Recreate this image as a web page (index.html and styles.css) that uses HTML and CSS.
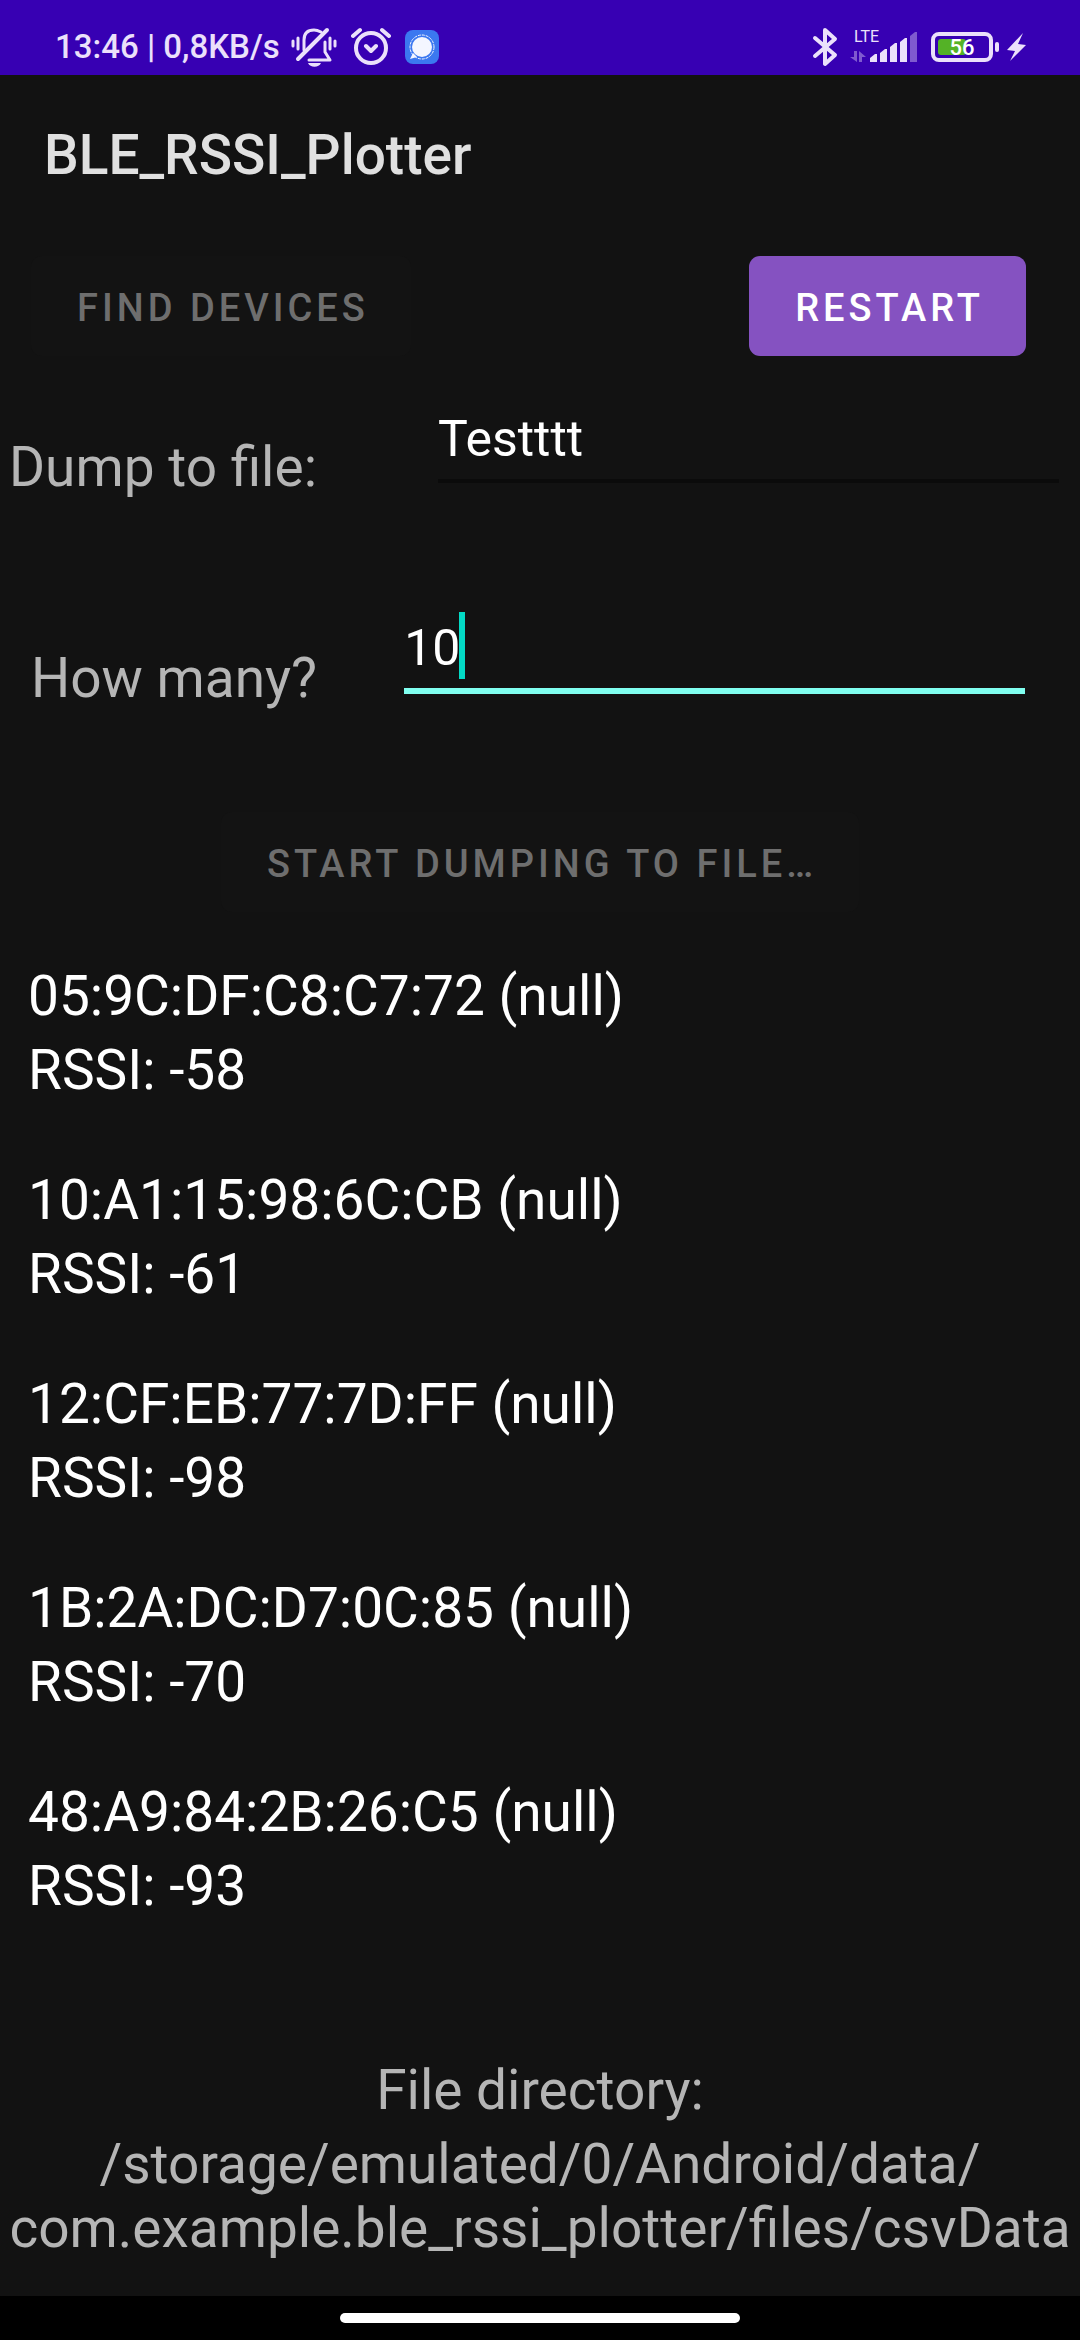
FILE: index.html
```html
<!DOCTYPE html>
<html lang="en">
<head>
<meta charset="utf-8">
<meta name="viewport" content="width=device-width, initial-scale=1">
<title>BLE_RSSI_Plotter</title>
<link rel="stylesheet" href="styles.css">
</head>
<body>
<div class="status-bar">
  <div class="status-left">
    <span class="status-text">13:46 | 0,8KB/s</span>
    <svg class="icon-bell" width="46" height="40" viewBox="0 0 46 40" fill="none" stroke="currentColor" stroke-width="4" stroke-linecap="round" stroke-linejoin="round" aria-hidden="true">
      <path d="M7 32 36 3"/>
      <path d="M13 23V13C13 6 17 3 23 3c3 0 5 1 7 2M34 15v10l5 8H18" stroke-width="3"/>
      <path d="M2 14v5M7 11v11M39 11v11M44 14v5" stroke-width="3"/>
      <path d="M17 36h13c-2 5-11 5-13 0z" fill="currentColor" stroke="none"/>
    </svg>
    <svg class="icon-alarm" width="40" height="40" viewBox="0 0 40 40" fill="none" stroke="currentColor" stroke-width="4" stroke-linecap="round" stroke-linejoin="round" aria-hidden="true">
      <circle cx="20" cy="21" r="15"/>
      <path d="M2 9 9 3M38 9 31 3M15 19l5 5 5-5"/>
    </svg>
    <svg class="icon-chat" width="34" height="34" viewBox="0 0 34 34" aria-hidden="true">
      <rect width="34" height="34" rx="8" fill="#3b78f0"/>
      <circle cx="17" cy="17" r="10" fill="#f4f6ff"/>
      <circle cx="17" cy="17" r="12" fill="none" stroke="#f4f6ff" stroke-width="1" stroke-dasharray="3 1"/>
      <path d="M8 23 5 29l7-2z" fill="#f4f6ff"/>
    </svg>
  </div>
  <div class="status-right">
    <svg class="icon-bluetooth" width="26" height="40" viewBox="0 0 26 40" fill="none" stroke="currentColor" stroke-width="4" stroke-linecap="round" stroke-linejoin="round" aria-hidden="true">
      <path d="M3 11 23 28 13 37V3L23 12 3 29"/>
    </svg>
    <svg class="icon-signal" width="68" height="48" viewBox="0 -6 68 48" fill="currentColor" aria-hidden="true">
      <text x="4" y="13" class="signal-label">LTE</text>
      <path d="M4 22h3v11L0 28h4zM9 33V22l7 6h-4v5z" opacity=".4"/>
      <path d="M20 29l5-4h2v8h-7zM30 24l5-4h2v13h-7zM40 18l5-4h2v19h-7zM50 13l5-4h2v24h-7z"/>
      <path d="M60 7l5-4h2v30h-7z" opacity=".4"/>
    </svg>
    <svg class="icon-battery" width="70" height="32" viewBox="0 0 70 32" aria-hidden="true">
      <rect x="2" y="3" width="58" height="26" rx="6" fill="none" stroke="currentColor" stroke-width="4"/>
      <rect x="7" y="8" width="28" height="16" rx="3" fill="#54b226"/>
      <rect x="64" y="11" width="4" height="10" rx="2" fill="currentColor"/>
      <text x="31" y="24" text-anchor="middle" class="battery-label">56</text>
    </svg>
    <svg class="icon-bolt" width="20" height="30" viewBox="0 0 20 30" fill="currentColor" aria-hidden="true">
      <path d="M16 1 0 18l8 1-5 10L19 13l-8-1z"/>
    </svg>
  </div>
</div>

<header class="app-bar"><h1>BLE_RSSI_Plotter</h1></header>

<main class="content">
  <div class="actions">
    <button type="button" class="button" disabled>FIND DEVICES</button>
    <button type="button" class="button button-primary">RESTART</button>
  </div>
  <div class="field field-file">
    <label for="file">Dump to file:</label>
    <div class="input-wrap"><input id="file" type="text" value="Testttt"></div>
  </div>
  <div class="field field-count">
    <label for="count">How many?</label>
    <div class="input-wrap"><input id="count" class="active" type="text" inputmode="numeric" value="10"><span class="caret"></span></div>
  </div>
  <button type="button" class="button button-dump" disabled>START DUMPING TO FILE…</button>
  <ul class="devices">
    <li><p>05:9C:DF:C8:C7:72 (null)</p><p>RSSI: -58</p></li>
    <li><p>10:A1:15:98:6C:CB (null)</p><p>RSSI: -61</p></li>
    <li><p>12:CF:EB:77:7D:FF (null)</p><p>RSSI: -98</p></li>
    <li><p>1B:2A:DC:D7:0C:85 (null)</p><p>RSSI: -70</p></li>
    <li><p>48:A9:84:2B:26:C5 (null)</p><p>RSSI: -93</p></li>
  </ul>
</main>

<footer class="directory">
  <p>File directory:</p>
  <p>/storage/emulated/0/Android/data/<wbr>com.example.ble_rssi_plotter/files/csvData</p>
</footer>
<div class="nav-bar"><span class="nav-handle"></span></div>
</body>
</html>
```
FILE: styles.css
```css
* {
  box-sizing: border-box;
}

body {
  margin: 0;
  min-height: 100vh;
  display: flex;
  flex-direction: column;
  background: #121212;
  color: #fff;
  font-family: Roboto, "Liberation Sans", sans-serif;
  font-size: 55px;
  line-height: 64px;
}

p,
h1,
ul {
  margin: 0;
  padding: 0;
}

svg {
  display: block;
  flex: none;
}

/* Status bar */
.status-bar {
  height: 75px;
  padding: 19px 53px 0 55px;
  display: flex;
  justify-content: space-between;
  align-items: center;
  background: #3700b3;
  color: #ebe0fb;
}

.status-left,
.status-right {
  display: flex;
  align-items: center;
}

.status-text {
  font-size: 33px;
  font-weight: 500;
  line-height: 40px;
}

.icon-bell {
  margin-left: 11px;
}

.icon-alarm {
  margin-left: 14px;
}

.icon-chat {
  margin-left: 14px;
}

.icon-signal {
  margin-left: 12px;
}

.icon-battery {
  margin-left: 13px;
}

.icon-bolt {
  margin-left: 6px;
}

.signal-label {
  font-size: 16px;
}

.battery-label {
  font-size: 22px;
  font-weight: 500;
  fill: #fff;
}

/* App bar */
.app-bar {
  height: 160px;
  padding: 0 44px;
  display: flex;
  align-items: center;
}

h1 {
  font-size: 55px;
  font-weight: 500;
  color: #e0e0e0;
}

/* Controls */
.content {
  display: flex;
  flex-direction: column;
}

.actions {
  margin-top: 21px;
  padding: 0 54px 0 31px;
  display: flex;
  justify-content: space-between;
}

.button {
  height: 100px;
  padding: 4px 42px 0 46px;
  border: 0;
  border-radius: 11px;
  background: #131313;
  color: #6e6e6e;
  font-family: inherit;
  font-size: 38px;
  font-weight: 500;
  letter-spacing: 4px;
}

.button-primary {
  background: #8552c1;
  color: #fff;
}

.field {
  display: flex;
  align-items: flex-end;
  color: #b5b5b5;
}

.field-file {
  margin-top: 54px;
  padding: 0 21px 0 9px;
  gap: 121px;
}

.field-count {
  margin-top: 120px;
  padding: 0 55px 0 31px;
  gap: 87px;
}

.input-wrap {
  position: relative;
  flex: 1;
  margin-bottom: 16px;
}

input {
  display: block;
  width: 100%;
  height: 73px;
  padding: 0 0 11px;
  border: 0;
  border-bottom: 4px solid #0b0b0b;
  outline: 0;
  background: transparent;
  color: #fff;
  font-family: inherit;
  font-size: 50px;
  line-height: 58px;
}

input.active {
  height: 75px;
  border-bottom: 6px solid #80fff0;
}

.caret {
  position: absolute;
  left: 55px;
  bottom: 15px;
  width: 6px;
  height: 67px;
  background: #03dac5;
}

.button-dump {
  align-self: center;
  margin-top: 102px;
}

/* Scan results */
.devices {
  margin-top: 52px;
  padding: 0 28px;
  display: flex;
  flex-direction: column;
  gap: 66px;
  list-style: none;
}

.devices li,
.directory {
  display: flex;
  flex-direction: column;
  gap: 10px;
}

.directory {
  margin-top: auto;
  padding: 66px 8px 36px;
  color: #b5b5b5;
  text-align: center;
}

/* System navigation */
.nav-bar {
  height: 44px;
  display: flex;
  align-items: center;
  justify-content: center;
  background: #000;
}

.nav-handle {
  width: 37%;
  height: 10px;
  border-radius: 5px;
  background: #fff;
}
```
